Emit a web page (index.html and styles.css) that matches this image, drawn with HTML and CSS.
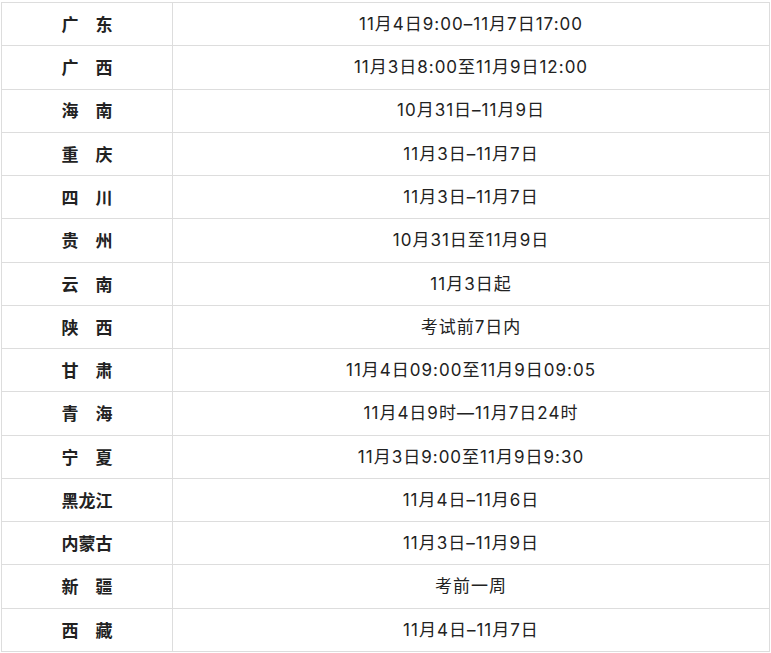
FILE: index.html
```html
<!DOCTYPE html>
<html lang="zh-CN">
<head>
<meta charset="utf-8">
<link rel="stylesheet" href="styles.css">
</head>
<body>
<table class="schedule">
  <colgroup><col class="c-prov"><col class="c-time"></colgroup>
  <tbody>
    <tr><td class="prov">广　东</td><td class="time">11月4日9:00–11月7日17:00</td></tr>
    <tr><td class="prov">广　西</td><td class="time">11月3日8:00至11月9日12:00</td></tr>
    <tr><td class="prov">海　南</td><td class="time">10月31日–11月9日</td></tr>
    <tr><td class="prov">重　庆</td><td class="time">11月3日–11月7日</td></tr>
    <tr><td class="prov">四　川</td><td class="time">11月3日–11月7日</td></tr>
    <tr><td class="prov">贵　州</td><td class="time">10月31日至11月9日</td></tr>
    <tr><td class="prov">云　南</td><td class="time">11月3日起</td></tr>
    <tr><td class="prov">陕　西</td><td class="time">考试前7日内</td></tr>
    <tr><td class="prov">甘　肃</td><td class="time">11月4日09:00至11月9日09:05</td></tr>
    <tr><td class="prov">青　海</td><td class="time">11月4日9时—11月7日24时</td></tr>
    <tr><td class="prov">宁　夏</td><td class="time">11月3日9:00至11月9日9:30</td></tr>
    <tr><td class="prov">黑龙江</td><td class="time">11月4日–11月6日</td></tr>
    <tr><td class="prov">内蒙古</td><td class="time">11月3日–11月9日</td></tr>
    <tr><td class="prov">新　疆</td><td class="time">考前一周</td></tr>
    <tr><td class="prov">西　藏</td><td class="time">11月4日–11月7日</td></tr>
  </tbody>
</table>
</body>
</html>
```
FILE: styles.css
```css
html, body {
  margin: 0;
  padding: 0;
  background: #fff;
}
body {
  padding: 2px 0 0 1px;
  font-family: "Noto Sans CJK SC", "Noto Sans", sans-serif;
  color: #222;
}
.schedule {
  border-collapse: collapse;
  width: 769px;
  table-layout: fixed;
}
.c-prov { width: 171px; }
.schedule tr { height: 43.27px; }
.schedule td {
  border: 1px solid #dddddd;
  text-align: center;
  vertical-align: middle;
  padding: 0;
  line-height: 1.2;
}
.prov {
  font-size: 17px;
  font-weight: 700;
}
.time {
  font-family: Inter, "Noto Sans CJK SC", sans-serif;
  font-size: 17px;
  font-weight: 400;
  letter-spacing: 1px;
  padding-left: 1px;
}
```
